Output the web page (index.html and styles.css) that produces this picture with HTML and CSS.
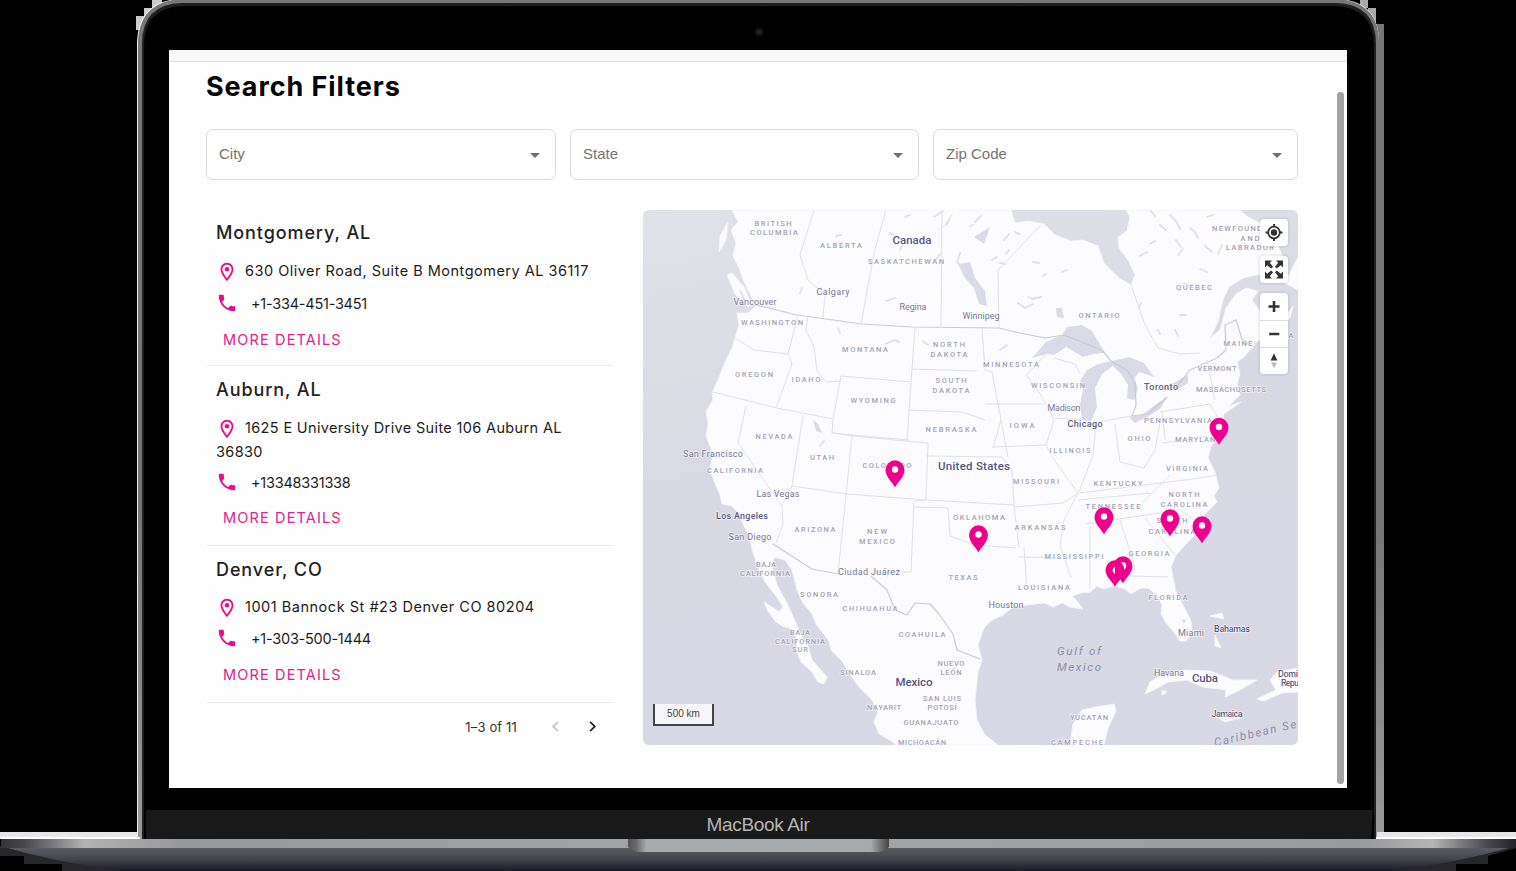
FILE: index.html
```html
<!DOCTYPE html>
<html lang="en">
<head>
<meta charset="utf-8">
<title>Search Filters</title>
<link rel="stylesheet" href="styles.css">
</head>
<body>
<svg class="defs" width="0" height="0" aria-hidden="true">
  <symbol id="i-place" viewBox="0 0 24 24"><path d="M12 2C8.13 2 5 5.13 5 9c0 5.25 7 13 7 13s7-7.75 7-13c0-3.87-3.13-7-7-7zM7 9c0-2.76 2.24-5 5-5s5 2.24 5 5c0 2.88-2.88 7.19-5 9.88C9.92 16.21 7 11.85 7 9z"/><circle cx="12" cy="9" r="2.5"/></symbol>
  <symbol id="i-phone" viewBox="0 0 24 24"><path d="M6.62 10.790c1.440 2.830 3.760 5.140 6.590 6.590l2.200-2.200c.27-.27.67-.36 1.020-.24 1.120.37 2.330.57 3.570.57.55 0 1 .45 1 1V20c0 .55-.45 1-1 1-9.390 0-17-7.610-17-17 0-.55.45-1 1-1h3.500c.55 0 1 .45 1 1 0 1.250.2 2.450.57 3.570.11.35.03.74-.25 1.020l-2.200 2.200z"/></symbol>
  <symbol id="i-left" viewBox="0 0 24 24"><path d="M15.41 7.41 14 6l-6 6 6 6 1.410-1.410L10.830 12z"/></symbol>
  <symbol id="i-right" viewBox="0 0 24 24"><path d="M8.590 16.590 13.170 12 8.590 7.410 10 6l6 6-6 6z"/></symbol>
</svg>

<svg class="chassis" viewBox="0 0 1516 871" aria-hidden="true">
  <defs>
    <linearGradient id="side" x1="0" x2="0" y1="0" y2="1"><stop offset="0" stop-color="#777"/><stop offset=".6" stop-color="#747474"/><stop offset="1" stop-color="#999"/></linearGradient>
    <linearGradient id="lip"><stop offset="0" stop-color="#333339"/><stop offset=".015" stop-color="#47474c"/><stop offset=".055" stop-color="#b2b2b2"/><stop offset=".12" stop-color="#97989a"/><stop offset=".5" stop-color="#a5a6a8"/><stop offset=".9" stop-color="#999a9c"/><stop offset=".945" stop-color="#b5b5b5"/><stop offset=".98" stop-color="#4a4a50"/><stop offset="1" stop-color="#222228"/></linearGradient>
    <linearGradient id="base" x1="0" x2="0" y1="0" y2="1"><stop offset="0" stop-color="#606166"/><stop offset=".5" stop-color="#45464c"/><stop offset="1" stop-color="#1b1a29"/></linearGradient>
    <linearGradient id="notch"><stop offset="0" stop-color="#555"/><stop offset=".03" stop-color="#66676a"/><stop offset=".07" stop-color="#a9aaac"/><stop offset=".93" stop-color="#a9aaac"/><stop offset=".97" stop-color="#707072"/><stop offset="1" stop-color="#444"/></linearGradient>
  </defs>
  <path d="M152 0h10v8h-10zM144 8h8v8h-8zM136 16h8v14h-8z" fill="#ccc"/>
  <path d="M1360 0h8v8h-8zM1368 8h8v16h-8z" fill="#aaa"/>
  <path d="M1375 24h9v812h-9z" fill="url(#side)"/>
  <path d="M137 839V42Q138 2 178-1H1340Q1379 2 1379 42V839z" fill="#eee"/>
  <path d="M138 839V42Q139 3 179-1H1339Q1379 3 1379 42V839z" fill="url(#side)"/>
  <path d="M142 839V44Q142 4 182 3H1336Q1376 4 1376 44V839z" fill="#1f1f23"/>
  <path d="M144 839V46Q144 7 184 6H1334Q1374 7 1374 46V839z" fill="#000"/>
  <path d="M146 810H1373L1371 839H146z" fill="#191919"/>
  <circle cx="759" cy="32" r="4" fill="#151517"/><circle cx="759" cy="32" r="2" fill="#27272b"/>
  <path d="M0 832H137V839H0zM1377 832H1516V839H1377z" fill="#e6e6e6"/>
  <path d="M0 837H140V839H0zM1376 837H1516V839H1376z" fill="#fff"/>
  <path d="M0 846H1516V848L1488 856V864H1456V871H62V864H24V856H0z" fill="#27272b"/>
  <path d="M0 846H1516Q1460 862 1395 871H120Q55 862 0 846z" fill="url(#base)"/>
  <path d="M1 839H1516V848H1z" fill="url(#lip)"/>
  <path d="M628 839H889V847Q884 852 876 852H641Q633 852 628 847z" fill="url(#notch)"/>
</svg>

<main class="screen">
  <div class="topbar"></div>
  <div class="page">
    <h1>Search Filters</h1>
    <div class="filters">
      <div class="select"><span>City</span><i class="caret"></i></div>
      <div class="select"><span>State</span><i class="caret"></i></div>
      <div class="select"><span>Zip Code</span><i class="caret"></i></div>
    </div>
    <div class="results">
      <section class="list">
        <article class="item montgomery">
          <h2>Montgomery, AL</h2>
          <p class="addr"><svg><use href="#i-place"/></svg>630 Oliver Road, Suite B Montgomery AL 36117</p>
          <p class="phone"><svg><use href="#i-phone"/></svg>+1-334-451-3451</p>
          <a class="more">MORE DETAILS</a>
        </article>
        <article class="item auburn">
          <h2>Auburn, AL</h2>
          <p class="addr"><svg><use href="#i-place"/></svg>1625 E University Drive Suite 106 Auburn AL<br>36830</p>
          <p class="phone"><svg><use href="#i-phone"/></svg>+13348331338</p>
          <a class="more">MORE DETAILS</a>
        </article>
        <article class="item denver">
          <h2>Denver, CO</h2>
          <p class="addr"><svg><use href="#i-place"/></svg>1001 Bannock St #23 Denver CO 80204</p>
          <p class="phone"><svg><use href="#i-phone"/></svg>+1-303-500-1444</p>
          <a class="more">MORE DETAILS</a>
        </article>
        <div class="pager"><span>1–3 of 11</span><svg class="off"><use href="#i-left"/></svg><svg><use href="#i-right"/></svg></div>
      </section>

      <section class="map">
        <svg class="canvas" viewBox="643 210 655 535">
          <defs>
            <linearGradient id="sea" x1="0" y1="0" x2=".25" y2="1"><stop offset="0" stop-color="#e1e2e7"/><stop offset=".5" stop-color="#d9d9e4"/><stop offset="1" stop-color="#d9d9e6"/></linearGradient>
            <g id="pin"><path d="M0 14.500C-2 10-9.500 4-9.500-3A9.500 9.700 0 0 1 9.500-3C9.500 4 2 10 0 14.500z" fill="#ee008c"/><circle cy="-3.500" r="3.200" fill="#fff"/></g>
          </defs>
          <rect x="643" y="210" width="655" height="535" fill="url(#sea)"/>
          <g class="land">
            <path d="M732 210 738 222 731 230 736 243 733 256 739 268 744 282 750 294 756 306 748 313 737 313 739 325 735 338 732 348 725 362 718 380 712 393 713 400 706 411 708 423 706 436 713 454 710 470 714 481 720 495 722 504 732 506 740 515 744 526 750 536 752 549 757 565 765 582 776 596 783 607 779 612 772 607 764 602 768 611 775 621 782 626 792 629 797 639 797 652 801 662 812 672 818 682 824 684 827 677 820 669 812 660 808 646 800 634 795 621 787 603 777 585 772 566 774 557 785 560 792 570 797 590 803 603 812 614 816 624 829 641 831 650 842 661 848 672 860 688 872 700 878 712 874 722 879 734 893 742 896 745H998L985 735 977 720 975 700 978 672 982 660 978 645 984 628 992 620 1003 615 1014 606 1028 605 1044 603 1053 607 1062 603 1070 607 1083 609 1077 601 1072 596 1081 593 1090 592 1097 586 1103 589 1115 586 1125 589 1131 594 1141 588 1148 588 1157 595 1162 605 1161 614 1166 623 1174 632 1180 641 1186 641 1192 633 1191 621 1184 607 1176 592 1173 577 1171 567 1176 555 1186 544 1194 536 1203 516 1217 502 1214 496 1219 488 1215 472 1208 458 1211 447 1219 434 1224 414 1241 402 1229 406 1240 395 1237 385 1240 373 1237 362 1244 357 1257 342 1270 331 1279 331 1290 318 1293 306 1286 316 1270 321 1262 314 1252 300 1258 291 1246 288 1236 294 1226 308 1220 330 1210 338 1218 322 1223 300 1229 287 1243 278 1261 274 1277 267 1283 257 1276 242 1265 233 1260 223 1248 217 1240 210H1126L1130 217 1127 231 1118 237 1119 248 1128 260 1135 275 1131 285 1119 278 1104 263 1098 246 1083 240 1071 241 1055 235 1044 224 1028 221 1015 223 1011 210z"/>
            <path d="M727 275 732 273 744 287 752 305 748 307 735 294zM720 236 728 222 726 240 719 252zM1285 283 1298 257V290zM1070 745 1073 724 1082 710 1096 707 1114 704 1116 711 1108 728 1104 745zM1145 694 1150 682 1165 673 1185 670 1210 671 1233 680 1257 680 1240 690 1225 697 1226 690 1203 687 1187 680 1168 682 1156 689zM1257 699 1276 690 1270 680 1277 672 1298 668V692L1282 693 1264 701zM1213 715 1230 713 1240 718 1225 722zM1162 690 1167 692 1162 695zM1210 616 1222 613 1224 619zM1215 635 1221 648 1215 646z"/>
          </g>
          <g class="water">
            <path d="M1032 358 1046 342 1062 335 1067 327 1082 325 1092 331 1102 348 1105 353 1094 354 1083 357 1073 351 1066 347 1054 355 1047 354z"/>
            <path d="M1080 381 1087 370 1098 364 1112 361 1129 357 1144 363 1154 377 1139 372 1134 379 1138 388 1134 400 1127 398 1128 385 1121 374 1113 366 1102 374 1095 388 1097 407 1091 421 1082 420 1080 404 1083 390z"/>
            <path d="M1129 417 1142 415 1155 405 1168 396 1160 409 1147 417 1135 423zM1163 389 1177 381 1188 375 1188 383 1178 389z"/>
            <path d="M958 264 970 262 975 278 985 291 987 306 979 304 974 288 965 278zM944 226 953 213 948 224 939 230zM1056 308 1062 308 1064 318 1057 317zM813 419 818 424 822 433 816 431zM1182 619 1186 620 1184 624zM974 237 990 227 984 244z"/>
          </g>
          <path class="specks" d="M905 217l5-2M934 217l9-6M836 236l5-1M940 254l-5 7M992 260l5-3M1009 250l-3 4M1000 263l5 1M1033 262l6 1M1043 276l3-2M1018 303l7 5 8-4M1028 297l4 2 9-2M1140 256l7-4M1150 244l5-3M1160 225l6 5M1176 240l5 7M1190 228l5 4 3 6M1205 246l7 6M1139 307l2-4M1178 255l5-6M1180 315l6 0M1200 269l7 3M1222 245l-4 9M1160 334l-2-4M1175 330l3 6M1000 350l7-5M1062 272l5-2M820 446l4-5M885 344l10-4 4 2M840 333l-2-5M923 341l5 4M900 250l3-6M965 270l-8-8 3-9M745 300l-5-9M800 293l2-5M886 301l9-3M1004 240l5-6M1150 210l5 6M1170 215l6 6 4 8M1207 217l6-2M1184 283l6 3M890 233l4 2M1015 232l4 2M975 222l6-6M970 226l3-1"/>
          <g class="borders">
            <path class="nation" d="M756 305 797 315 862 324 912 327 999 328 1020 333 1045 338 1064 335 1102 350 1111 361 1127 370 1135 382 1136 405 1132 416 1148 414 1167 397M1178 385 1190 370 1217 358 1226 350 1225 325 1236 320 1242 339 1249 345M773 544 812 569 839 574M871 576 887 590 895 610 907 615 915 603 930 604 939 614 953 634 957 650 980 659"/>
            <path d="M814 210 800 255 808 280 825 295 823 317M886 210 874 253 861 324M942 210 941 328M735 338 754 350 788 354M798 315 788 354 792 364 776 408M713 392 777 408 833 419M808 315 806 330 814 347 817 371 826 382 841 381M833 419 841 376 911 382M915 327 907 440M746 406 738 443 781 505M803 415 792 486 847 494M833 419 832 433 909 440M852 436 838 574M912 369 977 371M908 410 962 412 985 420M833 433 852 436 928 443 926 500 847 494M914 501 911 572 868 572M926 500 915 501M914 507 948 508 950 536 975 545 1016 548M926 456 1002 457 1012 470 1014 505 927 500M982 328 985 370 992 372 1001 420 1008 457M985 404 1044 404M993 447 1046 445 1054 460 1078 493 1064 520 1060 545 1071 578M1001 420 993 448M1050 350 1026 375 1038 390 1048 408 1054 420 1046 445M1054 358 1075 364 1080 374M1055 418 1088 420M1096 423 1093 455 1079 492M1115 424 1120 462 1144 468 1155 450 1160 423M1088 424 1131 416M1160 412 1210 404 1219 420M1163 443 1210 436M1079 493 1193 479 1217 475M1085 524 1180 510M1090 526 1090 588M1120 520 1135 567 1130 576M1145 518 1175 555M1130 576 1168 577M1024 548 1027 590M1018 557 1064 558M1014 505 1019 548M999 328 998 270 1041 225M1131 285 1145 325 1158 348 1180 354 1200 353M1078 493 1063 503 1014 507M1078 500 1150 493M1162 412 1165 440M792 486 782 505 783 525 776 543M995 470 1012 470M1180 510 1194 520M1170 475 1142 503M1207 360 1215 400"/>
          </g>
          <g class="st">
            <text x="773" y="226" textLength="37">BRITISH</text><text x="774" y="235" textLength="48">COLUMBIA</text>
            <text x="841" y="248" textLength="42">ALBERTA</text><text x="906" y="264" textLength="76">SASKATCHEWAN</text>
            <text x="772" y="325" textLength="62">WASHINGTON</text><text x="865" y="352" textLength="46">MONTANA</text>
            <text x="949" y="347" textLength="32">NORTH</text><text x="949" y="357" textLength="37">DAKOTA</text>
            <text x="951" y="383" textLength="31">SOUTH</text><text x="951" y="393" textLength="37">DAKOTA</text>
            <text x="754" y="377" textLength="38">OREGON</text><text x="806" y="382" textLength="29">IDAHO</text><text x="873" y="403" textLength="45">WYOMING</text>
            <text x="774" y="439" textLength="37">NEVADA</text><text x="822" y="460" textLength="24">UTAH</text><text x="951" y="432" textLength="51">NEBRASKA</text>
            <text x="887" y="468" textLength="49">COLORADO</text><text x="735" y="473" textLength="56">CALIFORNIA</text><text x="1011" y="367" textLength="56">MINNESOTA</text>
            <text x="1058" y="388" textLength="54">WISCONSIN</text><text x="1022" y="428" textLength="25">IOWA</text><text x="1070" y="453" textLength="41">ILLINOIS</text>
            <text x="1139" y="441" textLength="23">OHIO</text><text x="1099" y="318" textLength="41">ONTARIO</text><text x="1194" y="290" textLength="36">QUÉBEC</text>
            <text x="1237" y="231" textLength="50">NEWFOUND</text><text x="1250" y="241" textLength="19">AND</text><text x="1250" y="250" textLength="48">LABRADOR</text>
            <text x="1238" y="346" textLength="29">MAINE</text><text x="1217" y="371" textLength="39">VERMONT</text><text x="1231" y="392" textLength="70">MASSACHUSETTS</text>
            <text x="1178" y="423" textLength="68">PENNSYLVANIA</text><text x="1198" y="442" textLength="46">MARYLAND</text><text x="1187" y="471" textLength="42">VIRGINIA</text>
            <text x="1036" y="484" textLength="46">MISSOURI</text><text x="1118" y="486" textLength="49">KENTUCKY</text><text x="1113" y="509" textLength="55">TENNESSEE</text>
            <text x="1184" y="497" textLength="31">NORTH</text><text x="1184" y="507" textLength="47">CAROLINA</text><text x="1172" y="523" textLength="31">SOUTH</text><text x="1172" y="534" textLength="47">CAROLINA</text>
            <text x="979" y="520" textLength="52">OKLAHOMA</text><text x="1040" y="530" textLength="51">ARKANSAS</text><text x="1074" y="559" textLength="59">MISSISSIPPI</text>
            <text x="1149" y="556" textLength="41">GEORGIA</text><text x="963" y="580" textLength="29">TEXAS</text><text x="1044" y="590" textLength="52">LOUISIANA</text><text x="1168" y="600" textLength="39">FLORIDA</text>
            <text x="815" y="532" textLength="41">ARIZONA</text><text x="877" y="534" textLength="20">NEW</text><text x="877" y="544" textLength="36">MEXICO</text>
            <text x="766" y="567" textLength="20">BAJA</text><text x="765" y="576" textLength="50">CALIFORNIA</text><text x="819" y="597" textLength="38">SONORA</text>
            <text x="870" y="611" textLength="55">CHIHUAHUA</text><text x="922" y="637" textLength="47">COAHUILA</text><text x="800" y="635" textLength="20">BAJA</text><text x="800" y="644" textLength="50">CALIFORNIA</text><text x="800" y="652" textLength="16">SUR</text>
            <text x="951" y="666" textLength="27">NUEVO</text><text x="951" y="675" textLength="21">LEÓN</text><text x="858" y="675" textLength="36">SINALOA</text><text x="942" y="701" textLength="38">SAN LUIS</text><text x="942" y="710" textLength="29">POTOSÍ</text>
            <text x="884" y="710" textLength="34">NAYARIT</text><text x="931" y="725" textLength="55">GUANAJUATO</text><text x="922" y="744.500" textLength="48">MICHOACÁN</text><text x="1089" y="720" textLength="38">YUCATÁN</text><text x="1077" y="744.500" textLength="52">CAMPECHE</text>
            <text x="1291" y="338" textLength="5">A</text>
          </g>
          <g class="city">
            <text x="755" y="305" textLength="43">Vancouver</text><text x="833" y="295" textLength="33">Calgary</text><text x="913" y="310" textLength="27">Regina</text><text x="981" y="319" textLength="37">Winnipeg</text>
            <text x="713" y="457" textLength="60">San Francisco</text><text x="778" y="497" textLength="43">Las Vegas</text><text x="750" y="540" textLength="43">San Diego</text><text x="869" y="575" textLength="62">Ciudad Juárez</text>
            <text x="1064" y="411" textLength="33">Madison</text><text x="1006" y="608" textLength="35">Houston</text><text x="1191" y="636" textLength="26">Miami</text><text x="1169" y="676" textLength="30">Havana</text>
          </g>
          <g class="city strong">
            <text x="742" y="519" textLength="52">Los Angeles</text><text x="1161" y="390" textLength="34">Toronto</text><text x="1085" y="427" textLength="35">Chicago</text>
            <text x="1232" y="632" textLength="36">Bahamas</text><text x="1227" y="717" textLength="31">Jamaica</text><text x="1288" y="677" textLength="20">Domi</text><text x="1290" y="686" textLength="18">Repu</text>
          </g>
          <g class="country">
            <text x="912" y="244" textLength="39">Canada</text><text x="974" y="470" textLength="72">United States</text><text x="914" y="686" textLength="37">Mexico</text><text x="1205" y="682" textLength="26">Cuba</text>
          </g>
          <g class="seaname"><text x="1079" y="655" textLength="44">Gulf of</text><text x="1079" y="671" textLength="44">Mexico</text><text x="1256" y="737" textLength="84" transform="rotate(-13 1256 737)">Caribbean Se</text></g>
          <use href="#pin" x="895" y="473"/><use href="#pin" x="978.500" y="538"/><use href="#pin" x="1104" y="520"/><use href="#pin" x="1170" y="522"/><use href="#pin" x="1202" y="529"/><use href="#pin" x="1219" y="430.500"/><use href="#pin" x="1123" y="569"/>
          <path d="M1115 587C1113 582 1105.500 577 1105.500 570A9.500 9.700 0 0 1 1124.500 570C1124.500 577 1117 582 1115 587z" fill="#ee008c"/>
          <path d="M1123.500 563q4 3 1 7zM1115 567q-5 3 0 7z" fill="#fff"/>
        </svg>
        <div class="controls">
          <div class="group"><svg viewBox="0 0 27 27"><circle cx="13.500" cy="13.500" r="5.800" fill="none" stroke="#333" stroke-width="1.800"/><circle cx="13.500" cy="13.500" r="3.200"/><path d="M12.500 5h2v3h-2zM12.500 19h2v3h-2zM5 12.500h3v2H5zM19 12.500h3v2h-3z"/></svg></div>
          <div class="group"><svg viewBox="0 0 27 27"><path d="M4.500 4.500h7L9.300 6.700l3.200 4-1.800 1.800-4-3.200-2.200 2.200zM22.500 4.500h-7l2.200 2.200-3.200 4 1.800 1.800 4-3.200 2.200 2.200zM4.500 22.500h7l-2.200-2.200 3.200-4-1.800-1.800-4 3.200-2.200-2.200zM22.500 22.500h-7l2.200-2.200-3.200-4 1.800-1.800 4 3.200 2.200-2.200z"/></svg></div>
          <div class="group">
            <svg viewBox="0 0 27 27"><path d="M12.200 8h2.600v4.200H19v2.600h-4.200V19h-2.600v-4.200H8v-2.600h4.200z"/></svg>
            <svg viewBox="0 0 27 27"><path d="M8.500 12.200h10.500v2.600H8.500z"/></svg>
            <svg viewBox="0 0 27 27"><path d="M10 13 13.500 5.500 17 13z"/><path d="M10.500 15h6l-3 6z" fill="#bbb"/></svg>
          </div>
        </div>
        <div class="scale">500 km</div>
      </section>
    </div>
  </div>
  <i class="scrollbar"></i>
</main>
<footer class="model">MacBook Air</footer>
</body>
</html>
```
FILE: styles.css
```css
* { box-sizing: border-box; }
body { margin: 0; width: 1516px; height: 871px; overflow: hidden; background: #000; font-family: Inter, "Liberation Sans", sans-serif; position: relative; padding-top: 50px; }
h1, h2, p { margin: 0; font-weight: 400; }
.defs { position: absolute; }
.chassis { position: absolute; left: 0; top: 0; width: 1516px; height: 871px; }
.screen { position: relative; width: 1178px; height: 738px; margin-left: 169px; background: #fefefe; }
.topbar { height: 12px; background: #f8f8f8; border-bottom: 1px solid #dedede; }
.page { padding: 8px 49px 0 37px; }
h1 { font-size: 27px; line-height: 34px; font-weight: 700; color: #050505; letter-spacing: .92px; white-space: nowrap; }
.filters { display: grid; grid-template-columns: 350px 349px 365px; gap: 14px; margin-top: 25px; }
.select { height: 51px; border: 1.500px solid #dcdcdc; border-radius: 7px; display: flex; align-items: center; justify-content: space-between; padding: 0 15px 2px 12px; font: 15px "Liberation Sans", sans-serif; color: #757575; }
.caret { border: 5px solid transparent; border-top-color: #707070; border-bottom: 0; margin-top: 3px; }
.results { display: flex; justify-content: space-between; margin-top: 30px; }
.list { width: 407px; }
.item { height: 156px; padding: 10px 0 0 9px; border-bottom: 1px solid #ebebeb; margin-left: 1px; }
h2 { font-size: 18px; line-height: 26px; color: #222; letter-spacing: .9px; font-weight: 500; }
.addr { font-size: 14.500px; line-height: 24px; margin-top: 13px; color: #1c1c1c; white-space: nowrap; letter-spacing: .49px; }
.addr svg { width: 22px; height: 22px; vertical-align: -7px; margin-right: 7px; fill: #e2128a; }
.phone { display: flex; align-items: center; height: 24px; margin-top: 8px; font-size: 14.500px; color: #1c1c1c; letter-spacing: -.24px; }
.phone svg { width: 22px; height: 22px; margin-right: 13px; fill: #e2128a; }
.more { display: block; font-size: 14.500px; line-height: 24px; margin: 13px 0 0 7px; color: #e0218f; letter-spacing: 1.150px; font-weight: 400; }
.auburn { height: 180px; padding-top: 11px; }
.auburn .addr { letter-spacing: .35px; }
.auburn .phone { margin-top: 6px; }
.auburn .more { margin-top: 12px; }
.denver { height: 157px; padding-top: 11px; }
.denver .addr { margin-top: 12px; letter-spacing: .52px; }
.denver .phone { margin-top: 7px; }
.pager { display: flex; align-items: center; justify-content: flex-end; height: 47px; padding-right: 10px; font-size: 13px; color: #333; letter-spacing: .15px; }
.pager span { margin-right: 28px; }
.pager svg { width: 21px; height: 21px; fill: #222; margin-left: 16px; }
.pager svg.off { fill: #c4c4c4; margin-left: 0; }
.map { position: relative; width: 655px; height: 535px; border-radius: 6px; overflow: hidden; }
.canvas { display: block; width: 655px; height: 535px; }
.land { fill: #fcfcfe; stroke: #f4f4fa; stroke-width: 1; }
.water { fill: #dadbe6; }
.specks { fill: none; stroke: #dfe0e9; stroke-width: 1.800; stroke-linecap: round; }
.borders { fill: none; stroke: #e0e0e7; stroke-width: 1; stroke-linejoin: round; }
.borders .nation { stroke: #cacad3; stroke-width: 1.200; }
.canvas text { text-anchor: middle; font-family: Roboto, "Liberation Sans", sans-serif; paint-order: stroke; stroke: #ffffff99; stroke-width: 1.500px; }
.st { font-size: 7.500px; font-weight: 500; fill: #a2a2b2; }
.city { font-size: 9px; fill: #76768f; }
.strong { fill: #5b5b7c; font-weight: 500; }
.country { font-size: 11.500px; font-weight: 500; fill: #55557f; }
.canvas .seaname text { font-size: 11.500px; font-style: italic; fill: #8d8da9; stroke: none; }
.controls { position: absolute; top: 9px; right: 10px; display: flex; flex-direction: column; gap: 10px; }
.group { width: 28px; background: #fff; border-radius: 4px; box-shadow: 0 0 0 2px #0000000d; }
.group svg { display: block; width: 28px; height: 27px; fill: #333; }
.group svg + svg { border-top: 1px solid #ddd; }
.scale { position: absolute; left: 10px; bottom: 19px; width: 61px; height: 22px; border: 2px solid #444; border-top: 0; background: #ffffffbf; font: 10px/20px "Liberation Sans", sans-serif; text-align: center; color: #444; }
.scrollbar { position: absolute; right: 3px; top: 42px; width: 7px; height: 692px; border-radius: 4px; background: #a3a3a3; }
.model { position: relative; width: 1516px; height: 29px; margin-top: 22px; text-align: center; font: 19px/29px "Liberation Sans", sans-serif; letter-spacing: -.35px; color: #b4b4b4; }
```
